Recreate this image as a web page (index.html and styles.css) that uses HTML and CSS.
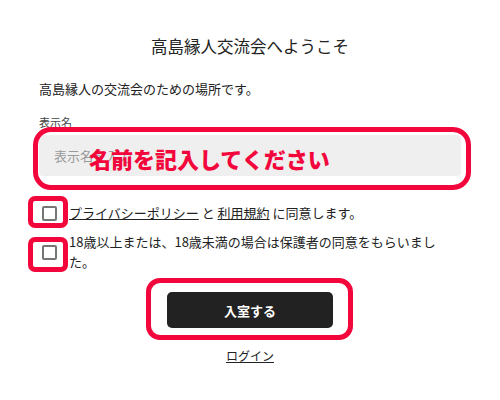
FILE: index.html
```html
<!DOCTYPE html>
<html lang="ja">
<head>
  <meta charset="UTF-8">
  <meta name="viewport" content="width=device-width, initial-scale=1.0">
  <title>高島縁人交流会へようこそ</title>
  <link rel="stylesheet" href="styles.css">
</head>
<body>
  <main class="join">
    <h1>高島縁人交流会へようこそ</h1>
    <p class="lead">高島縁人の交流会のための場所です。</p>
    <form id="join-form">
      <label for="display-name" class="field-label">表示名</label>
      <div class="field mark">
        <input type="text" id="display-name" name="display-name" placeholder="表示名を入力">
        <span class="note">名前を記入してください</span>
      </div>
      <div class="checks">
        <label class="check">
          <span class="check-box mark"><input type="checkbox" name="policy"></span>
          <span class="check-text"><a href="#">プライバシーポリシー</a> と <a href="#">利用規約</a> に同意します。</span>
        </label>
        <label class="check">
          <span class="check-box mark"><input type="checkbox" name="age"></span>
          <span class="check-text">18歳以上または、18歳未満の場合は保護者の同意をもらいました。</span>
        </label>
      </div>
      <div class="actions">
        <button type="submit" class="enter-btn mark">入室する</button>
      </div>
    </form>
    <p class="login"><a href="#">ログイン</a></p>
  </main>
</body>
</html>
```

FILE: styles.css
```css
body {
  margin: 0;
  padding: 0;
  font-family: "Noto Sans CJK JP", "Noto Sans", sans-serif;
  background-color: #FFFFFF;
  color: #222222;
}
.join {
  width: 422px;
  margin: 0 auto;
  padding-top: 34px;
}
h1 {
  font-size: 16.5px;
  font-weight: 400;
  line-height: 24px;
  text-align: center;
  margin: 0;
}
.lead {
  font-size: 13px;
  line-height: 20px;
  margin: 21px 0 0;
}
.field-label {
  display: block;
  font-size: 11px;
  line-height: 16px;
  color: #444444;
  margin-top: 15px;
}
.field {
  position: relative;
  margin-top: 5px;
}
.field input {
  display: block;
  width: 100%;
  height: 41px;
  box-sizing: border-box;
  padding: 0 15px;
  border: none;
  border-radius: 4px;
  background-color: #EFEFEF;
  font-family: inherit;
  font-size: 13px;
  color: #222222;
  outline: none;
}
.field input::placeholder {
  color: #999999;
}
.note {
  position: absolute;
  left: 50px;
  top: 12px;
  font-size: 22px;
  line-height: 22px;
  font-weight: 900;
  color: #F2063B;
  white-space: nowrap;
}
/* red hand-drawn frames */
.mark {
  position: relative;
}
.mark::after {
  content: "";
  position: absolute;
  border: 5px solid #F2063B;
  pointer-events: none;
}
.field::after {
  left: -6px;
  right: -10px;
  top: -8px;
  bottom: -14px;
  border-radius: 18px;
}
.checks {
  margin-top: 27px;
  display: flex;
  flex-direction: column;
  gap: 9px;
}
.check {
  display: flex;
  align-items: center;
  gap: 12px;
  font-size: 13px;
  line-height: 20px;
}
.check-box {
  display: flex;
  margin-left: 3px;
  flex-shrink: 0;
}
.check-box input {
  appearance: none;
  width: 15px;
  height: 15px;
  margin: 0;
  border: 2px solid #767676;
  border-radius: 2px;
  box-sizing: border-box;
  background-color: #FFFFFF;
}
.check-box::after {
  left: -14px;
  right: -11px;
  top: -10px;
  bottom: -7px;
  border-radius: 7px;
}
.check:last-child .check-box::after {
  top: -8px;
  bottom: -12px;
}
.check-text {
  max-width: 378px;
}
.check-text a {
  color: #222222;
  text-decoration: underline;
}
.actions {
  display: flex;
  justify-content: center;
  margin-top: 20px;
}
.enter-btn {
  width: 166px;
  height: 36px;
  border: none;
  border-radius: 5px;
  background-color: #222222;
  color: #FFFFFF;
  font-family: inherit;
  font-size: 13px;
  font-weight: 700;
  cursor: pointer;
}
.enter-btn::after {
  left: -21px;
  right: -20px;
  top: -14px;
  bottom: -12px;
  border-radius: 14px;
}
.login {
  text-align: center;
  font-size: 12px;
  line-height: 18px;
  margin: 19px 0 0;
}
.login a {
  color: #222222;
}
```
